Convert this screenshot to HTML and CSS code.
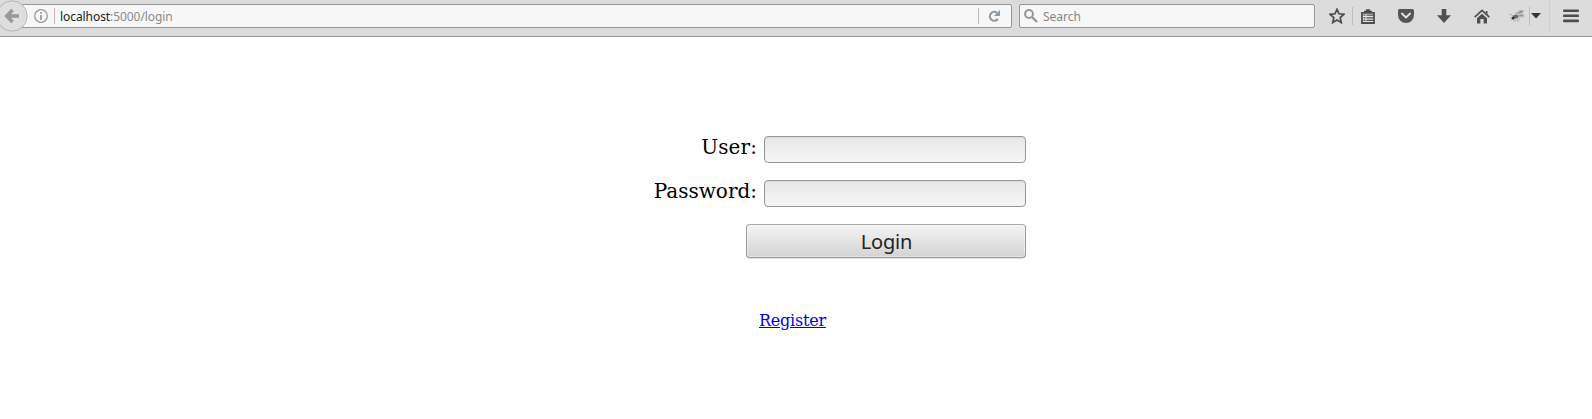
FILE: index.html
```html
<!DOCTYPE html>
<html lang="en">
<head>
<meta charset="utf-8">
<title>Login</title>
<link rel="stylesheet" href="styles.css">
</head>
<body>
<header class="toolbar">
  <button class="back" aria-label="Back"><svg width="28" height="32" viewBox="0 0 28 32"><circle cx="12" cy="16" r="15.2" fill="#dedede" stroke="#b5b5b5"/><path d="M12.5 10L6.8 16l5.7 6M8 16h11" fill="none" stroke="#999" stroke-width="3.6"/></svg></button>
  <div class="address">
    <svg class="info" width="14" height="14" viewBox="0 0 14 14"><circle cx="7" cy="7" r="6.3" fill="none" stroke="#959595" stroke-width="1.2"/><path d="M7 3v1.8M7 6v5" stroke="#959595" stroke-width="1.7"/></svg>
    <i class="rule rule-info"></i>
    <span class="url"><b>localhost</b>:5000/login</span>
    <i class="rule rule-reload"></i>
    <svg class="reload" width="12" height="12" viewBox="0 0 12 12"><path d="M9 2.8A4.4 4.4 0 1 0 9.8 9" fill="none" stroke="#8d9ba7" stroke-width="2.2"/><path d="M12 0v6H6z" fill="#8d9ba7"/></svg>
  </div>
  <div class="search">
    <svg width="14" height="14" viewBox="0 0 14 14"><circle cx="5" cy="5" r="3.9" fill="none" stroke="#969696" stroke-width="2"/><path d="M8 8l5 5" stroke="#969696" stroke-width="2.4"/></svg>
    <span>Search</span>
  </div>
  <nav class="tools">
    <svg class="star" width="16" height="16" viewBox="0 0 16 16"><path d="M8 1.3l2 4.5 4.9.5-3.7 3.3 1.1 5L8 12.1l-4.3 2.5 1.1-5L1.1 6.3 6 5.8z" fill="none" stroke="#4d4d4d" stroke-width="1.7"/></svg>
    <i class="rule"></i>
    <svg class="list" width="14" height="15" viewBox="0 0 14 15"><path d="M1 3.8h12v10.2H1z" fill="#e5e5e5" stroke="#4d4d4d" stroke-width="1.8"/><path d="M3 3.4V2l2-.4V.3h4v1.3l2 .4v1.4z" fill="#4d4d4d"/><path d="M2.5 6.2h2M5.5 6.2H12M2.5 8.8h2M5.5 8.8H12M2.5 11.4h2M5.5 11.4H12" stroke="#4d4d4d" stroke-width="1.3"/></svg>
    <svg class="pocket" width="16" height="14" viewBox="0 0 16 14"><path d="M1.5 0h13Q16 0 16 1.5V6a8 8 0 0 1-16 0V1.5Q0 0 1.5 0z" fill="#555"/><path d="M4 4.6l4 3.8 4-3.8" fill="none" stroke="#e8e8e8" stroke-width="2" stroke-linecap="round"/></svg>
    <svg class="down" width="14" height="14" viewBox="0 0 14 14"><path d="M4.7 0h4.6v6.2H14L7 14 0 6.2h4.7z" fill="#505050"/></svg>
    <svg class="home" width="16" height="15" viewBox="0 0 16 15"><path d="M.7 8.2L8 1.3l7.3 6.9" fill="none" stroke="#505050" stroke-width="1.7"/><path d="M11.8 2h1.7v3.5l-1.7-1.6zM3 9.3l5-4.5 5 4.5v5.2H9.6V10H6.4v4.5H3z" fill="#505050"/></svg>
    <svg class="bug" width="16" height="12" viewBox="0 0 16 12"><path d="M0 4l5 2M1 8l4-1M2 10l4-2M5 12l2-4M9 12L8 8M11 10L9 7M6 2l1 3" stroke="#999" stroke-width=".7"/><path d="M6 4l4-4 5 0-1 3-4 3zM9 6l5-2 2 2-3 2z" fill="#bbb"/><path d="M9 3l3-1M10 6l4-1M11 1l3 1" stroke="#777" stroke-width=".8"/><ellipse cx="6.8" cy="6.5" rx="2.7" ry="1.8" fill="#666"/><circle cx="4.2" cy="7.9" r="1.5" fill="#333"/></svg>
    <i class="rule rule-bug"></i>
    <svg class="caret" width="10" height="6" viewBox="0 0 10 6"><path d="M0 0h10L5 5.5z" fill="#333"/></svg>
    <i class="rule rule-menu"></i>
    <svg class="menu" width="16" height="14" viewBox="0 0 16 14"><path d="M1.2 1.7h13.6M1.2 6.8h13.6M1.2 11.9h13.6" stroke="#4d4d4d" stroke-width="2.6" stroke-linecap="round"/></svg>
  </nav>
</header>
<main>
  <form class="login">
    <div class="field"><label class="user" for="user">User:</label><input id="user" type="text"></div>
    <div class="field"><label for="password">Password:</label><input id="password" type="password"></div>
    <button class="submit" type="button">Login</button>
  </form>
  <a class="register" href="#">Register</a>
</main>
</body>
</html>
```
FILE: styles.css
```css
* { box-sizing: border-box; }
body { margin: 0; background: #fff; font-family: "DejaVu Serif", serif; overflow: hidden; }
svg { display: block; flex: none; }
.toolbar {
  display: flex; align-items: flex-start; height: 37px;
  background: #dcdcdc; border-bottom: 1px solid #969696;
  font-family: "Noto Sans", sans-serif; font-size: 12px;
}
.back { flex: none; width: 28px; height: 32px; padding: 0; border: 0; background: none; z-index: 1; }
.address {
  display: flex; align-items: center; width: 998px; height: 24px;
  margin: 4px 7px 0 -14px; padding-left: 19px;
  background: #f7f7f7; border: 1px solid #979797; border-radius: 2px;
}
.rule { flex: none; width: 1px; height: 18px; background: #bdbdbd; }
.rule-info { height: 16px; margin: 0 5px 0 6px; }
.url { color: #8b8b8b; white-space: nowrap; letter-spacing: -0.07px; }
.url b { color: #222; font-weight: 400; }
.rule-reload { height: 16px; margin-left: auto; }
.reload { margin: 0 11px 0 9px; }
.search {
  display: flex; align-items: center; width: 296px; height: 24px;
  margin-top: 4px; padding-left: 4px; color: #858585;
  background: #f7f7f7; border: 1px solid #979797; border-radius: 2px;
}
.search span { margin-left: 5px; }
.tools { display: flex; align-items: center; height: 32px; padding-left: 14px; }
.tools .rule { margin-left: 7px; }
.list { margin-left: 8px; }
.pocket { margin-left: 23px; }
.down { margin-left: 23px; }
.home { margin-left: 23px; }
.bug { margin-left: 19px; margin-top: -1px; }
.tools .rule-bug { margin-left: 4px; }
.caret { margin-left: 1px; }
.tools .rule-menu { height: 34px; margin-left: 8px; background: #cfcfcf; }
.menu { margin-left: 13px; }
main { display: flex; flex-direction: column; padding-top: 99px; }
.login { display: flex; flex-direction: column; align-items: flex-end; gap: 17px; width: 1026px; }
.field { display: flex; align-items: flex-start; height: 27px; }
.field label { margin: -1px 7px 0 0; font-size: 20px; line-height: 24px; }
.field .user { letter-spacing: 0.1px; }
.field input {
  width: 262px; height: 27px; border: 1px solid #969696; border-radius: 4px;
  background: linear-gradient(#e7e7e7, #f6f6f6); box-shadow: inset 0 1px 1px #dcdcdc;
}
.submit {
  width: 280px; height: 34px; padding: 1px 0 0 1px; border: 1px solid #999; border-top-color: #aaa; border-radius: 4px;
  background: linear-gradient(#f4f4f4, #d3d3d3); box-shadow: inset 0 0 0 1px #ffffff70, 0 1px 1px #0002;
  color: #232323; font: 20px/31px "Noto Sans", sans-serif; letter-spacing: -0.15px;
}
.register { align-self: flex-start; margin: 53px 0 0 759px; font-size: 16px; line-height: 19px; letter-spacing: -0.22px; color: #00e; }
```
